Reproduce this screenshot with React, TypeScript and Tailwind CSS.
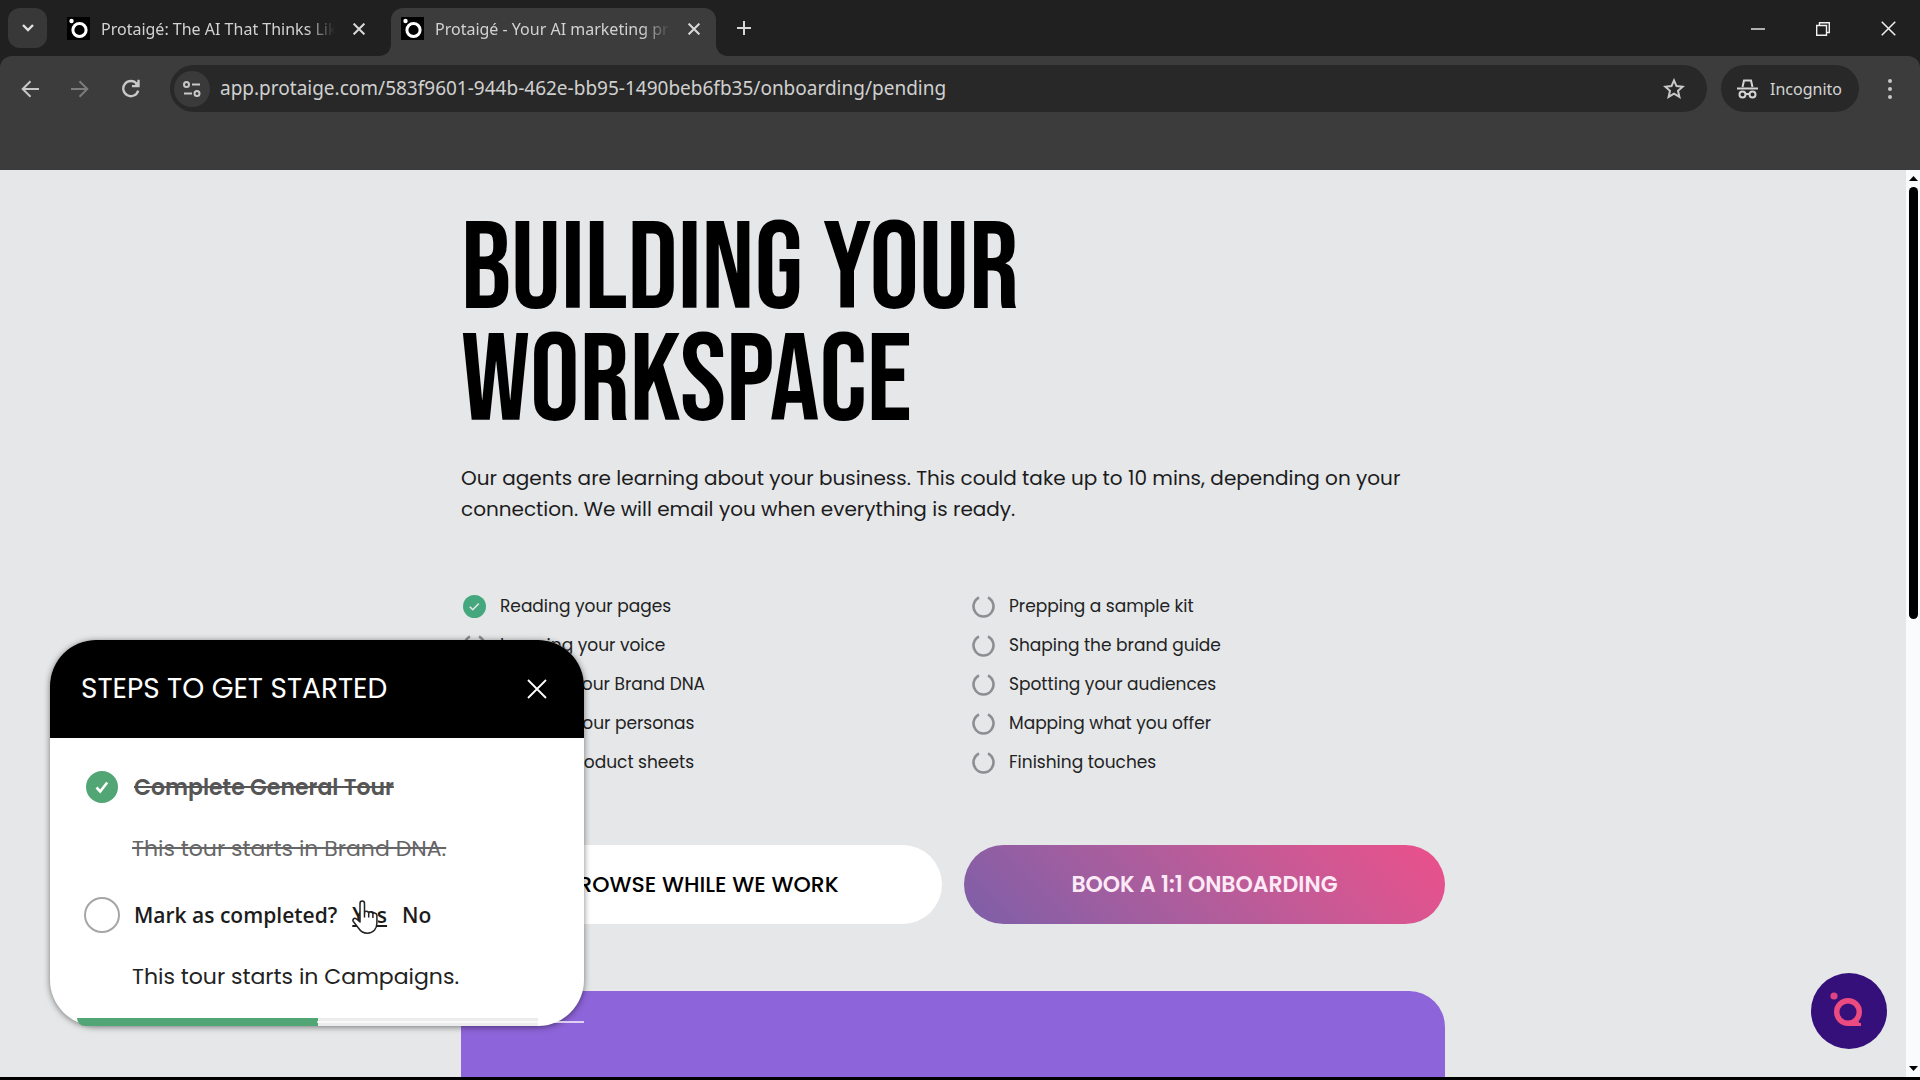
import { useState } from 'react'
import type { ReactNode } from 'react'

type Task = { label: string; done?: boolean }

const LEFT_TASKS: Task[] = [
  { label: 'Reading your pages', done: true },
  { label: 'Learning your voice' },
  { label: 'Building your Brand DNA' },
  { label: 'Drafting your personas' },
  { label: 'Making product sheets' },
]

const RIGHT_TASKS: Task[] = [
  { label: 'Prepping a sample kit' },
  { label: 'Shaping the brand guide' },
  { label: 'Spotting your audiences' },
  { label: 'Mapping what you offer' },
  { label: 'Finishing touches' },
]

function Favicon() {
  return (
    <svg viewBox="0 0 23 23" className="size-[23px] shrink-0 bg-black">
      <circle cx="12.5" cy="13" r="6.6" fill="none" stroke="#fff" strokeWidth="3" />
      <circle cx="4.5" cy="4" r="2.2" fill="#fff" />
    </svg>
  )
}

function CrossIcon({ className }: { className: string }) {
  return (
    <svg viewBox="0 0 20 20" className={className} fill="none" stroke="currentColor">
      <path d="M1 1 19 19M19 1 1 19" />
    </svg>
  )
}

function Tab({ title, active }: { title: string; active?: boolean }) {
  return (
    <div
      role="tab"
      aria-selected={!!active}
      className={
        active
          ? 'relative flex h-12 w-[325px] items-center rounded-t-xl bg-[#3c3c3c] pr-[16px] pb-[7px] pl-[10px]'
          : 'flex h-12 w-[334px] items-center pr-[26px] pb-[7px] pl-[10px]'
      }
    >
      {active && (
        <>
          <svg viewBox="0 0 12 12" className="absolute bottom-0 -left-3 size-3" fill="#3c3c3c">
            <path d="M12 0v12H0C7 12 12 7 12 0z" />
          </svg>
          <svg viewBox="0 0 12 12" className="absolute -right-3 bottom-0 size-3" fill="#3c3c3c">
            <path d="M0 0v12h12C5 12 0 7 0 0z" />
          </svg>
        </>
      )}
      <Favicon />
      <span className="ml-[11px] flex-1 overflow-hidden text-[16px] whitespace-nowrap text-[#d2d2d2] [mask-image:linear-gradient(to_right,black_88%,transparent)]">
        {title}
      </span>
      <button aria-label="Close tab" className="ml-[18px] text-[#d8d8d8]">
        <CrossIcon className="size-3 stroke-[3.4]" />
      </button>
    </div>
  )
}

function TabStrip() {
  return (
    <div className="flex h-14 items-end bg-[#202020]">
      <button aria-label="Search tabs" className="mb-2 ml-2 flex h-10 w-[39px] items-center justify-center rounded-xl bg-[#383838] text-[#e2e2e2]">
        <svg viewBox="0 0 12 8" className="w-3" fill="none" stroke="currentColor" strokeWidth="2.4">
          <path d="m1 1 5 5 5-5" />
        </svg>
      </button>
      <div role="tablist" className="ml-[10px] flex">
        <Tab title="Protaigé: The AI That Thinks Like a Marketer" />
        <Tab title="Protaigé - Your AI marketing professional" active />
      </div>
      <button aria-label="New tab" className="mb-5 ml-5 text-[#d8d8d8]">
        <svg viewBox="0 0 16 16" className="size-4" stroke="currentColor" strokeWidth="2">
          <path d="M8 1v14M1 8h14" />
        </svg>
      </button>
      <div className="mr-6 mb-5 ml-auto flex items-center gap-[51px] text-[#f0f0f0]">
        <button aria-label="Minimize">
          <svg viewBox="0 0 14 14" className="size-[14px]" stroke="currentColor" strokeWidth="1.4">
            <path d="M0 7h14" />
          </svg>
        </button>
        <button aria-label="Restore">
          <svg viewBox="0 0 14 14" className="size-[14px]" fill="none" stroke="currentColor" strokeWidth="1.4">
            <path d="M.7 3.5h9.8v9.8H.7zM3.5 3.5V.7h9.8v9.8h-2.8" />
          </svg>
        </button>
        <button aria-label="Close">
          <CrossIcon className="size-[15px] stroke-2" />
        </button>
      </div>
    </div>
  )
}

function Toolbar() {
  return (
    <div className="bg-[#202020]">
      <div className="flex h-[114px] items-start rounded-t-xl bg-[#3c3c3c] pt-[9px] pr-[28px] pl-[21px] text-[#c8c8c8]">
        <div className="flex h-[47px] items-center gap-8">
          <button aria-label="Back">
            <svg viewBox="0 0 18 18" className="size-[18px]" fill="none" stroke="currentColor" strokeWidth="2">
              <path d="M18 9H2M9.500 1.200 1.700 9l7.800 7.800" />
            </svg>
          </button>
          <button aria-label="Forward" className="text-[#7c7c7c]">
            <svg viewBox="0 0 18 18" className="size-[18px]" fill="none" stroke="currentColor" strokeWidth="2">
              <path d="M0 9h16M8.500 1.200 16.300 9l-7.800 7.800" />
            </svg>
          </button>
          <button aria-label="Reload">
            <svg viewBox="0 0 18 18" className="size-[19px]" fill="none" stroke="currentColor" strokeWidth="2.200">
              <path d="M15 4.600A7.200 7.200 0 1 0 16.300 11M16.600 .6v6.200H10.400" />
              <path d="M16.600 2v4.800h-4.800z" fill="currentColor" stroke="none" />
            </svg>
          </button>
        </div>
        <div className="ml-[30px] flex h-[47px] flex-1 items-center rounded-full bg-[#282828] pr-[22px] pl-1">
          <button aria-label="Site information" className="flex size-9 items-center justify-center rounded-full bg-[#3a3a3a]">
            <svg viewBox="0 0 18 16" className="w-[18px]" fill="none" stroke="currentColor" strokeWidth="2">
              <circle cx="3.500" cy="3.500" r="2.500" />
              <path d="M9 3.500h8M1 12.500h8" />
              <circle cx="14" cy="12.500" r="2.500" />
            </svg>
          </button>
          <input
            aria-label="Address"
            defaultValue="app.protaige.com/583f9601-944b-462e-bb95-1490beb6fb35/onboarding/pending"
            className="ml-[10px] flex-1 bg-transparent text-[19px] text-[#d0d0d0] outline-none"
          />
          <button aria-label="Bookmark">
            <svg viewBox="0 0 22 21" className="w-[22px]" fill="none" stroke="currentColor" strokeWidth="2">
              <path d="m11 2.400 2.500 5.700 6.200.6-4.700 4.100 1.400 6.100L11 15.700l-5.400 3.200L7 12.800 2.300 8.700l6.200-.6z" />
            </svg>
          </button>
        </div>
        <button className="ml-[14px] flex h-[47px] w-[138px] items-center gap-3 rounded-full bg-[#282828] pl-4 text-[16px] text-[#d4d4d4]">
          <svg viewBox="0 0 21 20" className="w-[21px]" fill="none" stroke="currentColor" strokeWidth="2">
            <path d="M5.500 8 7 1.500h7L15.500 8M0 9.500h21" />
            <circle cx="5.500" cy="15.500" r="3" />
            <circle cx="15.500" cy="15.500" r="3" />
            <path d="M8.500 15h4" />
          </svg>
          Incognito
        </button>
        <button aria-label="Menu" className="ml-[29px] flex h-[47px] flex-col items-center justify-center gap-1">
          <span className="size-1 rounded-full bg-[#c8c8c8]" />
          <span className="size-1 rounded-full bg-[#c8c8c8]" />
          <span className="size-1 rounded-full bg-[#c8c8c8]" />
        </button>
      </div>
    </div>
  )
}

function TaskItem({ label, done }: Task) {
  return (
    <li className="flex items-center gap-[14px] text-[17px] leading-[23px] text-[#222]">
      {done ? (
        <svg viewBox="0 0 23 23" className="size-[23px] shrink-0">
          <circle cx="11.500" cy="11.500" r="11.500" fill="#44a77d" />
          <path d="m6.800 11.700 3 3 6-6.200" fill="none" stroke="#e5e7e9" strokeWidth="1.600" />
        </svg>
      ) : (
        <svg viewBox="0 0 23 23" className="size-[23px] shrink-0" fill="none" stroke="#8c8e91" strokeWidth="2.600">
          <path d="M16 2.500a10 10 0 1 1-9 0" />
        </svg>
      )}
      {label}
    </li>
  )
}

function TaskList({ tasks }: { tasks: Task[] }) {
  return (
    <ul className="flex flex-col gap-4">
      {tasks.map((t) => (
        <TaskItem key={t.label} {...t} />
      ))}
    </ul>
  )
}

function Step({ id, done, title, text }: { id: string; done?: boolean; title: ReactNode; text: string }) {
  const [checked, setChecked] = useState(!!done)
  return (
    <div>
      <div className="flex h-9 items-center gap-[14px]">
        <div className="relative size-9">
          <input
            id={id}
            type="checkbox"
            checked={checked}
            onChange={(e) => setChecked(e.target.checked)}
            className="block size-9 appearance-none rounded-full border-2 border-[#a6a6a6] checked:border-white checked:bg-[#52a675]"
          />
          {checked && (
            <svg viewBox="0 0 36 36" className="pointer-events-none absolute inset-0" fill="none" stroke="#fff" strokeWidth="2.600">
              <path d="m12.500 18.500 3.700 4 7-9" />
            </svg>
          )}
        </div>
        {title}
      </div>
      <p className={checked ? 'mt-[26px] pl-12 text-[22px] leading-9 text-[#666] line-through' : 'mt-[26px] pl-12 text-[22px] leading-9 text-[#222]'}>
        {text}
      </p>
    </div>
  )
}

function HandCursor() {
  return (
    <svg viewBox="0 0 26 34" className="pointer-events-none absolute top-0 left-0 w-[26px]" fill="#fff" stroke="#222" strokeWidth="1.500" strokeLinejoin="round">
      <path d="M8 20V3.500C8 .2 12.500.2 12.500 3.500V13c.3-2.500 4-2.300 4.200.3.600-2 4-1.700 4.200.8.800-1.700 4-1.200 4 1.400V23c0 6-3.500 10.200-9.500 10.200-4.500 0-6.900-2-9-5.200L1.300 21.500c-1.200-2 .8-4 3-2.700L8 22z" />
      <path d="M12.500 13v4.500M16.700 13.500v4M20.900 14.500v3.500" fill="none" />
    </svg>
  )
}

function StepsWidget() {
  return (
    <section className="absolute bottom-[51px] left-[50px] w-[534px] rounded-[46px] bg-white shadow-[0_1px_6px_rgba(0,0,0,0.5)]">
      <header className="flex h-[98px] items-center justify-between rounded-t-[46px] bg-black pr-[37px] pl-[31px] text-white">
        <h2 className="text-[28px]">STEPS TO GET STARTED</h2>
        <button aria-label="Close steps">
          <CrossIcon className="size-5 stroke-[1.8]" />
        </button>
      </header>
      <div className="flex flex-col gap-[30px] px-[34px] pt-[31px] pb-[23px]">
        <Step
          id="general-tour"
          done
          title={
            <label htmlFor="general-tour" className="text-[22px] font-semibold text-[#555] line-through">
              Complete General Tour
            </label>
          }
          text="This tour starts in Brand DNA."
        />
        <Step
          id="campaigns-tour"
          title={
            <div className="flex gap-[15px] pt-[2px] font-['Open_Sans',sans-serif] text-[21px] font-semibold text-[#1c1c1c]">
              <label htmlFor="campaigns-tour">Mark as completed?</label>
              <span className="relative">
                <button className="underline">Yes</button>
                <HandCursor />
              </span>
              <button>No</button>
            </div>
          }
          text="This tour starts in Campaigns."
        />
      </div>
      <div role="progressbar" aria-label="Steps completed" aria-valuenow={47} className="ml-[27px] flex h-2 items-center">
        <div className="h-2 rounded-bl-lg bg-[#52a675]" style={{ width: '47.5%' }} />
        <div className="mr-[46px] h-2 flex-1 bg-[#ececec]" />
        <div className="absolute right-0 h-[2px] w-[267px] bg-white/70" />
      </div>
    </section>
  )
}

function Scrollbar() {
  return (
    <div className="flex w-[14px] shrink-0 flex-col items-center bg-[#fafbfc] py-[6px]">
      <svg viewBox="0 0 9 5" className="w-[9px]">
        <path d="M0 5h9L4.500 0z" />
      </svg>
      <div className="mt-[6px] w-[9px] rounded-full bg-black" style={{ height: '48.3%' }} />
      <svg viewBox="0 0 9 5" className="mt-auto w-[9px]">
        <path d="M0 0h9L4.500 5z" />
      </svg>
    </div>
  )
}

export default function App() {
  return (
    <div className="flex h-screen flex-col overflow-hidden border-b-[3px] border-black bg-[#e5e7e9] font-['Noto_Sans',sans-serif]">
      <TabStrip />
      <Toolbar />
      <div className="relative flex min-h-0 flex-1 font-[Poppins,Inter,sans-serif]">
        <main className="flex-1 overflow-hidden">
          <div className="mx-auto flex h-full max-w-[984px] flex-col">
            <h1 className="mt-[45px] shrink-0 font-['Bebas_Neue','Roboto_Condensed',sans-serif] text-[124px] leading-[112px] font-normal text-black">
              BUILDING YOUR
              <br />
              WORKSPACE
            </h1>
            <p className="mt-6 text-[20px] leading-[31px] text-[#1c1c1c]">
              Our agents are learning about your business. This could take up to 10 mins, depending on your connection. We will email you when everything is ready.
            </p>
            <div className="mt-[70px] grid grid-cols-2 gap-[36px] pl-[2px]">
              <TaskList tasks={LEFT_TASKS} />
              <TaskList tasks={RIGHT_TASKS} />
            </div>
            <div className="mt-[71px] grid shrink-0 grid-cols-2 gap-[22px] text-[22px] font-medium">
              <button className="h-[79px] rounded-full bg-white text-black">BROWSE WHILE WE WORK</button>
              <button className="h-[79px] rounded-full bg-linear-45 from-[#7c5ea8] to-[#ec4f8a] font-semibold text-[#fdeaf6]">BOOK A 1:1 ONBOARDING</button>
            </div>
            <div className="mt-[67px] flex-1 rounded-t-[36px] bg-[#8d64d9]" />
          </div>
        </main>
        <Scrollbar />
        <StepsWidget />
        <button aria-label="Open assistant" className="absolute right-[33px] bottom-[28px] size-[76px] rounded-full bg-[#35107a]">
          <svg viewBox="0 0 76 76" className="size-full">
            <circle cx="23" cy="23" r="3.600" fill="#e04583" />
            <circle cx="37" cy="39" r="11.300" fill="none" stroke="#ec4b80" strokeWidth="5.400" />
            <path d="M41 50h9v3H37z" fill="#ec4b80" />
            <path d="M46 46l4 6.500h-8z" fill="#ec4b80" />
          </svg>
        </button>
      </div>
    </div>
  )
}
